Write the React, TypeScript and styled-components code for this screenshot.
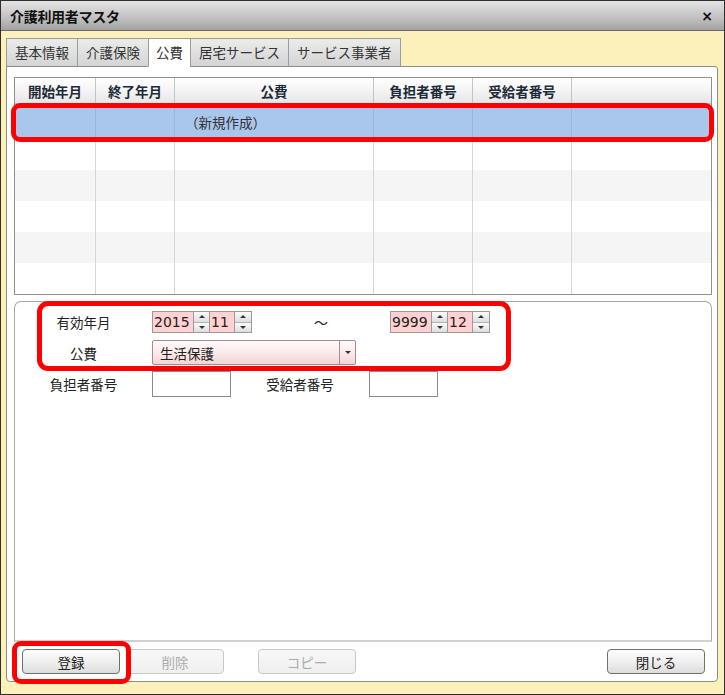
import styled, { createGlobalStyle } from "styled-components";

const GlobalStyle = createGlobalStyle`
  html, body {
    margin: 0;
    padding: 0;
  }
  body {
    font-family: "Noto Sans CJK JP", "Noto Sans", sans-serif;
    font-size: 13.5px;
    color: #222;
  }
  * {
    box-sizing: border-box;
  }
`;

const columns = [
  { title: "開始年月", width: 81 },
  { title: "終了年月", width: 79 },
  { title: "公費", width: 199 },
  { title: "負担者番号", width: 99 },
  { title: "受給者番号", width: 99 },
  { title: "", width: 0 },
];

const tabs = ["基本情報", "介護保険", "公費", "居宅サービス", "サービス事業者"];

function Spinner({ year, month }: { year: string; month: string }) {
  return (
    <SpinGroup>
      <SpinValue $w={40}>{year}</SpinValue>
      <SpinButtons>
        <SpinHalf>
          <Arrow $up />
        </SpinHalf>
        <SpinHalf>
          <Arrow />
        </SpinHalf>
      </SpinButtons>
      <SpinValue $w={24}>{month}</SpinValue>
      <SpinButtons>
        <SpinHalf>
          <Arrow $up />
        </SpinHalf>
        <SpinHalf>
          <Arrow />
        </SpinHalf>
      </SpinButtons>
    </SpinGroup>
  );
}

export default function App() {
  return (
    <>
      <GlobalStyle />
      <Window>
        <TitleBar>
          <Title>介護利用者マスタ</Title>
          <Close>×</Close>
        </TitleBar>
        <Body>
          <TabStrip>
            {tabs.map((t) => (
              <Tab key={t} $active={t === "公費"}>
                {t}
              </Tab>
            ))}
          </TabStrip>
          <Panel>
            <Grid>
              <HeaderRow>
                {columns.map((c, i) => (
                  <HeaderCell key={i} $w={c.width}>
                    {c.title}
                  </HeaderCell>
                ))}
              </HeaderRow>
              <BodyRow $selected $h={35}>
                {columns.map((c, i) => (
                  <Cell key={i} $w={c.width} $selected>
                    {i === 2 ? "（新規作成）" : ""}
                  </Cell>
                ))}
              </BodyRow>
              {[0, 1, 2, 3, 4].map((r) => (
                <BodyRow key={r} $alt={r % 2 === 1} $h={31}>
                  {columns.map((c, i) => (
                    <Cell key={i} $w={c.width} />
                  ))}
                </BodyRow>
              ))}
              <RowMark />
            </Grid>

            <FormPanel>
              <FormRow>
                <Label>有効年月</Label>
                <Spinner year="2015" month="11" />
                <Tilde>～</Tilde>
                <Spinner year="9999" month="12" />
              </FormRow>
              <FormRow $gap={7}>
                <Label>公費</Label>
                <Combo>
                  <ComboText>生活保護</ComboText>
                  <ComboButton>
                    <Arrow />
                  </ComboButton>
                </Combo>
              </FormRow>
              <FormRow $gap={6}>
                <Label>負担者番号</Label>
                <TextBox $w={79} />
                <MidLabel>受給者番号</MidLabel>
                <TextBox $w={69} />
              </FormRow>
              <FormMark />
            </FormPanel>

            <Footer>
              <ButtonSlot>
                <Button>登録</Button>
                <ButtonMark />
              </ButtonSlot>
              <Button disabled $ml={6}>
                削除
              </Button>
              <Button disabled $ml={34}>
                コピー
              </Button>
              <CloseButton>閉じる</CloseButton>
            </Footer>
          </Panel>
        </Body>
      </Window>
    </>
  );
}

const Window = styled.div`
  width: 725px;
  height: 695px;
  border: 1px solid #2e2e2e;
  background: #fcf0bb;
  display: flex;
  flex-direction: column;
`;

const TitleBar = styled.header`
  height: 30px;
  flex-shrink: 0;
  display: flex;
  align-items: center;
  justify-content: space-between;
  padding: 0 11px 0 9px;
  background: linear-gradient(#e4e4e4, #c0c0c0 60%, #a2a2a2);
  border-bottom: 1px solid #6a6a6a;
`;

const Title = styled.span`
  font-weight: bold;
  font-size: 14px;
  color: #111;
  letter-spacing: -0.3px;
`;

const Close = styled.span`
  font-family: "DejaVu Sans", sans-serif;
  font-weight: bold;
  font-size: 14px;
  color: #111;
`;

const Body = styled.div`
  flex: 1;
  display: flex;
  flex-direction: column;
  padding: 7px 6px 12px 5px;
`;

const TabStrip = styled.nav`
  display: flex;
  height: 29px;
  margin-bottom: -1px;
  position: relative;
  z-index: 1;
`;

const Tab = styled.div<{ $active?: boolean }>`
  display: flex;
  align-items: center;
  padding: 0 ${({ $active }) => ($active ? 7 : 8)}px 2px;
  margin-right: -1px;
  border: 1px solid #9c9c9c;
  border-bottom-color: ${({ $active }) => ($active ? "#fff" : "#8c8c8c")};
  background: ${({ $active }) =>
    $active ? "#fff" : "linear-gradient(#ececec, #d4d4d4)"};
  color: #333;
  font-size: 13.5px;
`;

const Panel = styled.section`
  flex: 1;
  display: flex;
  flex-direction: column;
  background: #fff;
  border: 1px solid #8c8c8c;
  border-radius: 0 3px 4px 4px;
  padding: 10px 5px 7px 7px;
`;

const Grid = styled.div`
  position: relative;
  border: 1px solid #8f8f8f;
  display: flex;
  flex-direction: column;
`;

const HeaderRow = styled.div`
  display: flex;
  height: 26px;
  background: linear-gradient(#ffffff, #f4f4f4 50%, #e6e6e6);
  border-bottom: 1px solid #bdbdbd;
`;

const HeaderCell = styled.div<{ $w: number }>`
  ${({ $w }) => ($w ? `width: ${$w}px;` : "flex: 1;")}
  display: flex;
  align-items: center;
  justify-content: center;
  border-right: ${({ $w }) => ($w ? "1px solid #c4c4c4" : "none")};
  font-weight: bold;
  font-size: 13.5px;
  color: #1d2a38;
`;

const BodyRow = styled.div<{ $selected?: boolean; $alt?: boolean; $h: number }>`
  display: flex;
  height: ${({ $h }) => $h}px;
  background: ${({ $selected, $alt }) =>
    $selected ? "#a9c6ec" : $alt ? "#f5f5f5" : "#fff"};
`;

const Cell = styled.div<{ $w: number; $selected?: boolean }>`
  ${({ $w }) => ($w ? `width: ${$w}px;` : "flex: 1;")}
  display: flex;
  align-items: center;
  padding-left: 10px;
  border-right: ${({ $w, $selected }) =>
    $w ? `1px solid ${$selected ? "#9bb5d6" : "#d6d6d6"}` : "none"};
  color: #333;
  font-size: 13.5px;
`;

const Mark = styled.div`
  position: absolute;
  border: 5px solid #ff0000;
  border-radius: 9px;
  pointer-events: none;
`;

const RowMark = styled(Mark)`
  left: -4px;
  top: 25px;
  width: 703px;
  height: 39px;
`;

const FormPanel = styled.div`
  position: relative;
  flex: 1;
  margin-top: 6px;
  border: 1px solid #a8a8a8;
  border-bottom: 2px solid #d0d0d0;
  border-radius: 7px 7px 0 0;
  padding-top: 9px;
  display: flex;
  flex-direction: column;
`;

const FormMark = styled(Mark)`
  left: 22px;
  top: -1px;
  width: 474px;
  height: 70px;
  border-radius: 11px;
`;

const FormRow = styled.div<{ $gap?: number }>`
  display: flex;
  align-items: center;
  margin-top: ${({ $gap }) => $gap ?? 0}px;
`;

const Label = styled.div`
  width: 137px;
  text-align: center;
  font-size: 13.5px;
  color: #222;
`;

const MidLabel = styled(Label)`
  width: 138px;
`;

const Tilde = styled.div`
  width: 138px;
  text-align: center;
  font-size: 14px;
  color: #222;
`;

const SpinGroup = styled.div`
  display: flex;
  height: 22px;
  border: 1px solid #9a9a9a;
`;

const SpinValue = styled.div<{ $w: number }>`
  width: ${({ $w }) => $w}px;
  background: #ffd1d1;
  padding-left: 1px;
  display: flex;
  align-items: center;
  font-family: "DejaVu Sans", sans-serif;
  font-size: 14px;
  color: #222;
`;

const SpinButtons = styled.div`
  width: 17px;
  display: flex;
  flex-direction: column;
  border-left: 1px solid #9a9a9a;
  border-right: 1px solid #9a9a9a;
  &:last-child {
    border-right: none;
  }
`;

const SpinHalf = styled.div`
  flex: 1;
  display: flex;
  align-items: center;
  justify-content: center;
  background: linear-gradient(#fafafa, #dedede);
  & + & {
    border-top: 1px solid #b4b4b4;
  }
`;

const Arrow = styled.span<{ $up?: boolean }>`
  width: 0;
  height: 0;
  border-left: 3px solid transparent;
  border-right: 3px solid transparent;
  ${({ $up }) =>
    $up ? "border-bottom: 3px solid #333;" : "border-top: 3px solid #333;"}
`;

const Combo = styled.div`
  width: 204px;
  height: 25px;
  display: flex;
  border: 1px solid #a88c8c;
  border-radius: 2px;
  background: linear-gradient(#fffafa, #fbeaea 50%, #f2d4d4);
`;

const ComboText = styled.div`
  flex: 1;
  display: flex;
  align-items: center;
  padding-left: 7px;
  font-size: 13.5px;
  color: #222;
`;

const ComboButton = styled.div`
  width: 16px;
  display: flex;
  align-items: center;
  justify-content: center;
  border-left: 1px solid #a88c8c;
`;

const TextBox = styled.div<{ $w: number }>`
  width: ${({ $w }) => $w}px;
  height: 26px;
  border: 1px solid #8a8a8a;
  background: #fff;
`;

const Footer = styled.footer`
  display: flex;
  align-items: center;
  padding: 7px 7px 0 8px;
`;

const ButtonSlot = styled.div`
  position: relative;
  display: flex;
`;

const ButtonMark = styled(Mark)`
  left: -10px;
  top: -8px;
  width: 119px;
  height: 43px;
`;

const Button = styled.button<{ $ml?: number }>`
  width: 98px;
  height: 25px;
  margin: 0 0 0 ${({ $ml }) => $ml ?? 0}px;
  padding: 0;
  border: 1px solid #707070;
  border-radius: 4px;
  background: linear-gradient(#fdfdfd, #f0f0f0 50%, #dcdcdc);
  font-family: "Noto Sans CJK JP", sans-serif;
  font-size: 13.5px;
  color: #222;

  &:disabled {
    border-color: #c8c8c8;
    background: linear-gradient(#f8f8f8, #efefef);
    color: #ababab;
  }
`;

const CloseButton = styled(Button)`
  margin-left: auto;
`;
